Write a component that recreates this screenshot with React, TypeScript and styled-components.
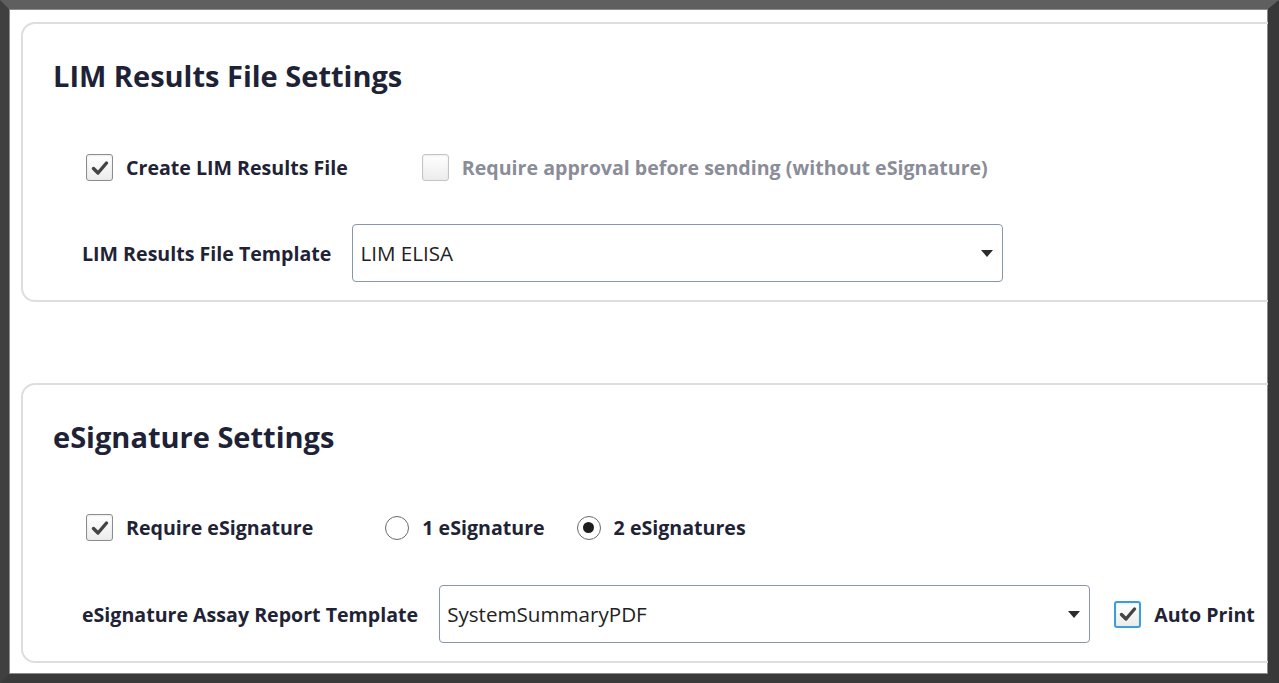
import React from "react";
import styled, { createGlobalStyle } from "styled-components";

const Global = createGlobalStyle`
  html, body { margin: 0; padding: 0; background: #4a4a4a; }
  body { font-family: "Open Sans", "Noto Sans", sans-serif; }
  * { box-sizing: border-box; }
`;

const Frame = styled.div`
  width: 1279px;
  height: 683px;
  border-style: solid;
  border-width: 9px 11px 9px 9px;
  border-color: #5f5f5f #383838 #3a3a3a #404040;
  box-shadow: inset 0 0 0 1px #8a8a8a;
  background: #ffffff;
  overflow: hidden;
`;

const Inner = styled.div`
  display: flex;
  flex-direction: column;
  gap: 81px;
  padding: 13px 0 0 12px;
  width: 100%;
  height: 100%;
  overflow: hidden;
`;

const Card = styled.section<{ $height: number }>`
  height: ${(p) => p.$height}px;
  margin-right: -40px;
  border: 2px solid #dedede;
  border-radius: 14px;
  padding: 34px 0 0 30px;
  display: flex;
  flex-direction: column;
`;

const Title = styled.h2`
  margin: 0;
  height: 36px;
  line-height: 36px;
  font-size: 29px;
  font-weight: 700;
  color: #1e2236;
`;

const OptionRow = styled.div<{ $top: number }>`
  display: flex;
  align-items: center;
  margin-top: ${(p) => p.$top}px;
  padding-left: 33px;
  height: 27px;
`;

const Option = styled.label<{ $gapAfter?: number; $disabled?: boolean }>`
  display: flex;
  align-items: center;
  gap: 13px;
  margin-right: ${(p) => p.$gapAfter ?? 0}px;
  font-size: 19.6px;
  font-weight: 700;
  color: ${(p) => (p.$disabled ? "#8a8d97" : "#1f2336")};
  white-space: nowrap;
`;

const Box = styled.span<{ $disabled?: boolean; $focus?: boolean }>`
  width: 27px;
  height: 27px;
  border-radius: 3px;
  border: ${(p) =>
    p.$focus ? "2px solid #3a9fd8" : p.$disabled ? "1px solid #c4c4c4" : "1px solid #8c8c8c"};
  background: linear-gradient(#ffffff, #ececec);
  box-shadow: inset 0 1px 2px rgba(0, 0, 0, 0.08);
  display: flex;
  align-items: center;
  justify-content: center;
  flex-shrink: 0;
`;

const Radio = styled.span<{ $on?: boolean }>`
  width: 24px;
  height: 24px;
  border-radius: 50%;
  border: 1.5px solid #6a6a6a;
  background: #fff;
  display: flex;
  align-items: center;
  justify-content: center;
  flex-shrink: 0;
  &::after {
    content: "";
    width: 11px;
    height: 11px;
    border-radius: 50%;
    background: ${(p) => (p.$on ? "#1e1e1e" : "transparent")};
  }
`;

const FieldRow = styled.div<{ $top: number }>`
  display: flex;
  align-items: center;
  margin-top: ${(p) => p.$top}px;
  padding-left: 29px;
  height: 58px;
`;

const FieldLabel = styled.span`
  font-size: 19.6px;
  font-weight: 700;
  color: #1f2336;
  margin-right: 21px;
  white-space: nowrap;
`;

const Select = styled.div`
  width: 651px;
  height: 58px;
  border: 1.5px solid #8797aa;
  border-radius: 4px;
  display: flex;
  align-items: center;
  justify-content: space-between;
  padding: 0 9px 0 7px;
  font-size: 20.6px;
  color: #222;
  flex-shrink: 0;
`;

const Arrow = styled.span`
  width: 0;
  height: 0;
  border-left: 6px solid transparent;
  border-right: 6px solid transparent;
  border-top: 7px solid #2c2c2c;
`;

const Check = () => (
  <svg width="18" height="16" viewBox="0 0 18 16">
    <path d="M2.5 8.5 L7 13 L15.5 3" fill="none" stroke="#444" strokeWidth="3.4" strokeLinecap="round" strokeLinejoin="round" />
  </svg>
);

export default function App() {
  return (
    <>
      <Global />
      <Frame>
        <Inner>
          <Card $height={280}>
            <Title>LIM Results File Settings</Title>
            <OptionRow $top={60}>
              <Option $gapAfter={74}>
                <Box>
                  <Check />
                </Box>
                Create LIM Results File
              </Option>
              <Option $disabled>
                <Box $disabled />
                Require approval before sending (without eSignature)
              </Option>
            </OptionRow>
            <FieldRow $top={43}>
              <FieldLabel>LIM Results File Template</FieldLabel>
              <Select>
                LIM ELISA
                <Arrow />
              </Select>
            </FieldRow>
          </Card>
          <Card $height={280}>
            <Title>eSignature Settings</Title>
            <OptionRow $top={59}>
              <Option $gapAfter={72}>
                <Box>
                  <Check />
                </Box>
                Require eSignature
              </Option>
              <Option $gapAfter={32}>
                <Radio />
                1 eSignature
              </Option>
              <Option>
                <Radio $on />
                2 eSignatures
              </Option>
            </OptionRow>
            <FieldRow $top={44}>
              <FieldLabel>eSignature Assay Report Template</FieldLabel>
              <Select>
                SystemSummaryPDF
                <Arrow />
              </Select>
              <Option style={{ marginLeft: 24 }}>
                <Box $focus>
                  <Check />
                </Box>
                Auto Print
              </Option>
            </FieldRow>
          </Card>
        </Inner>
      </Frame>
    </>
  );
}
